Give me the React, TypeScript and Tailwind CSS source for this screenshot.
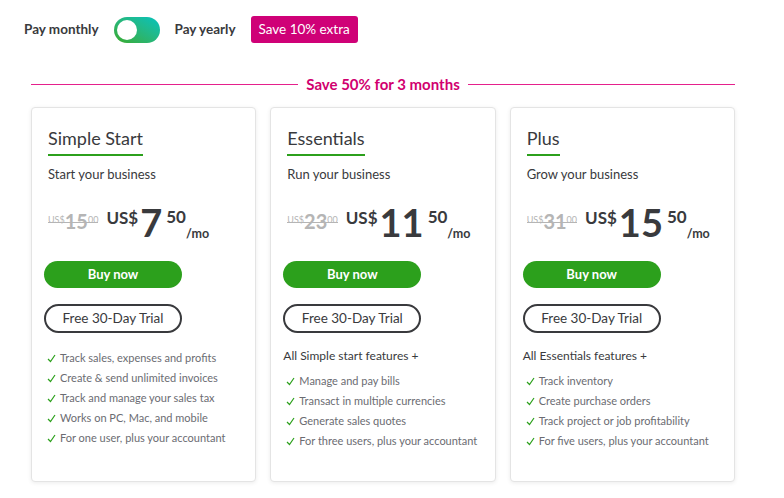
import React from "react";

const font = { fontFamily: "Lato, 'Open Sans', sans-serif" };

function Check() {
  return (
    <svg width="9" height="9" viewBox="0 0 9 9" className="shrink-0">
      <polyline points="1,5 3.5,7.5 8,1" fill="none" stroke="#2ca01c" strokeWidth="1.2" />
    </svg>
  );
}

type Plan = {
  title: string;
  sub: string;
  old: string;
  big: string;
  heading?: string;
  features: string[];
};

const plans: Plan[] = [
  {
    title: "Simple Start",
    sub: "Start your business",
    old: "15",
    big: "7",
    features: [
      "Track sales, expenses and profits",
      "Create & send unlimited invoices",
      "Track and manage your sales tax",
      "Works on PC, Mac, and mobile",
      "For one user, plus your accountant",
    ],
  },
  {
    title: "Essentials",
    sub: "Run your business",
    old: "23",
    big: "11",
    heading: "All Simple start features +",
    features: [
      "Manage and pay bills",
      "Transact in multiple currencies",
      "Generate sales quotes",
      "For three users, plus your accountant",
    ],
  },
  {
    title: "Plus",
    sub: "Grow your business",
    old: "31",
    big: "15",
    heading: "All Essentials features +",
    features: [
      "Track inventory",
      "Create purchase orders",
      "Track project or job profitability",
      "For five users, plus your accountant",
    ],
  },
];

function Card({ p }: { p: Plan }) {
  return (
    <div className="h-[375px] rounded-[4px] border border-[#e4e4e4] bg-white px-[12px] pt-[18px] shadow-[0_1px_4px_rgba(0,0,0,0.08)]">
      <div className="ml-[4px] inline-flex flex-col">
        <div className="text-[18px] leading-[24px] text-[#393a3d]">{p.title}</div>
        <div className="mt-[4px] h-[2px] bg-[#2ca01c]" />
      </div>
      <div className="ml-[4px] mt-[9px] text-[13px] leading-[18px] text-[#393a3d]">{p.sub}</div>
      <div className="ml-[4px] mt-[20px] flex h-[38px] items-start">
        <div className="relative mt-[10px] flex items-start text-[#b5b5b5]">
          <span className="mt-[2px] text-[9px] leading-none">US$</span>
          <span className="text-[20px] font-bold leading-[16px]">{p.old}</span>
          <span className="mt-[2px] text-[9px] leading-none">00</span>
          <span className="absolute left-0 right-0 top-[9px] h-[1px] bg-[#b5b5b5]" />
        </div>
        <span className="ml-[8px] mt-[6px] text-[17px] font-bold leading-none text-[#393a3d]">US$</span>
        <span className="ml-[2px] text-[38px] font-bold leading-none text-[#393a3d]">{p.big}</span>
        <span className="ml-[4px] mt-[5px] text-[17px] font-bold leading-none text-[#393a3d]">50</span>
        <span className="mb-[1px] self-end text-[12.5px] font-bold leading-none text-[#393a3d]">/mo</span>
      </div>
      <button className="mt-[20px] flex h-[27px] w-[138px] items-center justify-center rounded-full bg-[#2ca01c] text-[13px] font-bold text-white">
        Buy now
      </button>
      <button className="mt-[16px] flex h-[29px] w-[138px] items-center justify-center rounded-full border-2 border-[#393a3d] text-[13.5px] text-[#393a3d]">
        Free 30-Day Trial
      </button>
      {p.heading ? (
        <div className="mt-[13px] text-[12px] leading-[20px] text-[#393a3d]">{p.heading}</div>
      ) : null}
      <ul className={p.heading ? "mt-[5px]" : "mt-[15px]"}>
        {p.features.map((f) => (
          <li key={f} className="flex h-[20px] items-center gap-[4px] pl-[3px] text-[11px] text-[#6b6c72]">
            <Check />
            <span>{f}</span>
          </li>
        ))}
      </ul>
    </div>
  );
}

export default function App() {
  return (
    <div className="h-[498px] w-[784px] bg-white" style={font}>
      <div className="flex items-center pl-[24px] pt-[16px]">
        <span className="text-[13.5px] font-bold text-[#393a3d]">Pay monthly</span>
        <div className="ml-[15px] flex h-[26px] w-[46px] items-center rounded-full bg-gradient-to-tr from-[#3aaa1f] to-[#00c2bd] pl-[3px]">
          <div className="h-[20px] w-[20px] rounded-full bg-white" />
        </div>
        <span className="ml-[15px] text-[13.5px] font-bold text-[#393a3d]">Pay yearly</span>
        <div className="ml-[15px] flex h-[27px] w-[107px] items-center justify-center rounded-[3px] bg-[#cf0177] text-[13.5px] text-white">
          Save 10% extra
        </div>
      </div>
      <div className="ml-[31px] mt-[31px] flex w-[704px] items-center gap-[8px]">
        <div className="h-px flex-1 bg-[#e5208c]" />
        <span className="text-[15px] font-bold leading-[20px] text-[#d1006f]">Save 50% for 3 months</span>
        <div className="h-px flex-1 bg-[#e5208c]" />
      </div>
      <div className="ml-[31px] mt-[13px] grid w-[704px] grid-cols-3 gap-[14px]">
        {plans.map((p) => (
          <Card key={p.title} p={p} />
        ))}
      </div>
    </div>
  );
}
